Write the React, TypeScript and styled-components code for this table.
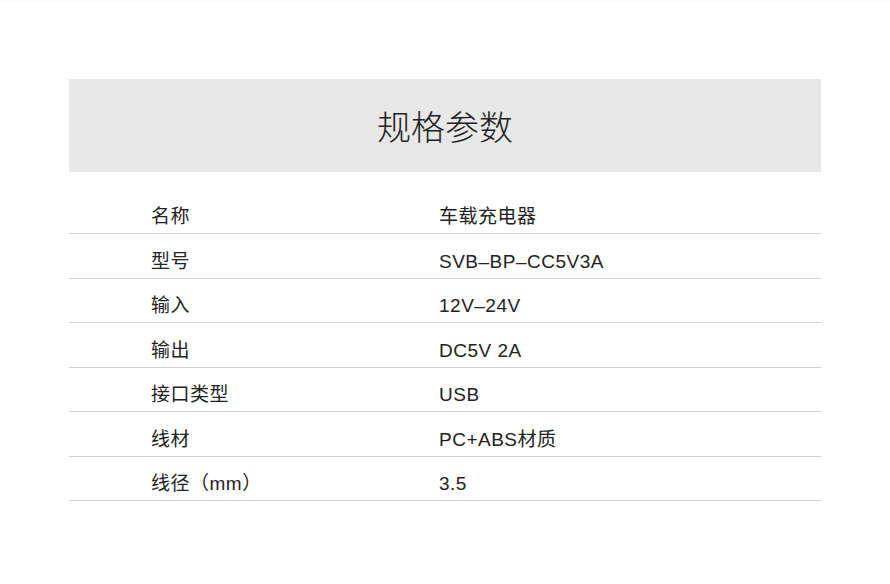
import styled, { createGlobalStyle } from "styled-components";

const specs = [
    { label: "名称", value: "车载充电器" },
    { label: "型号", value: "SVB–BP–CC5V3A" },
    { label: "输入", value: "12V–24V" },
    { label: "输出", value: "DC5V 2A" },
    { label: "接口类型", value: "USB" },
    { label: "线材", value: "PC+ABS材质" },
    { label: "线径（mm）", value: "3.5" },
];

export default function App() {
    return (
        <>
            <GlobalStyle />
            <Page>
                <Panel>
                    <Header>
                        <Title>规格参数</Title>
                    </Header>
                    <Table>
                        {specs.map((s) => (
                            <Row key={s.label}>
                                <Label>{s.label}</Label>
                                <Value>{s.value}</Value>
                            </Row>
                        ))}
                    </Table>
                </Panel>
            </Page>
        </>
    )
}

const GlobalStyle = createGlobalStyle`
    body {
        margin: 0;
        background: #ffffff;
        font-family: "Liberation Sans", "Noto Sans CJK SC", sans-serif;
        color: #222222;
    }
`
const Page = styled.div`
    width: 890px;
    height: 584px;
    padding-top: 78px;
    box-sizing: border-box;
    border-top: 1px solid #fafafa;
`
const Panel = styled.div`
    width: 752px;
    margin-left: 69px;
`
const Header = styled.div`
    height: 93px;
    background: #e8e8e8;
    display: flex;
    align-items: center;
    justify-content: center;
`
const Title = styled.h1`
    margin: 0;
    font-family: "Noto Sans CJK SC", sans-serif;
    font-size: 34px;
    font-weight: 300;
    color: #1e1e1e;
`
const Table = styled.div`
    margin-top: 17.5px;
    display: flex;
    flex-direction: column;
`
const Row = styled.div`
    height: 44.5px;
    box-sizing: border-box;
    border-bottom: 1px solid #d4d4d4;
    display: flex;
    align-items: flex-end;
    padding-bottom: 6px;
    font-size: 19px;
    line-height: 20px;
    letter-spacing: 0.5px;
`
const Label = styled.div`
    width: 288px;
    padding-left: 82px;
    flex-shrink: 0;
`
const Value = styled.div`
    flex: 1;
`
